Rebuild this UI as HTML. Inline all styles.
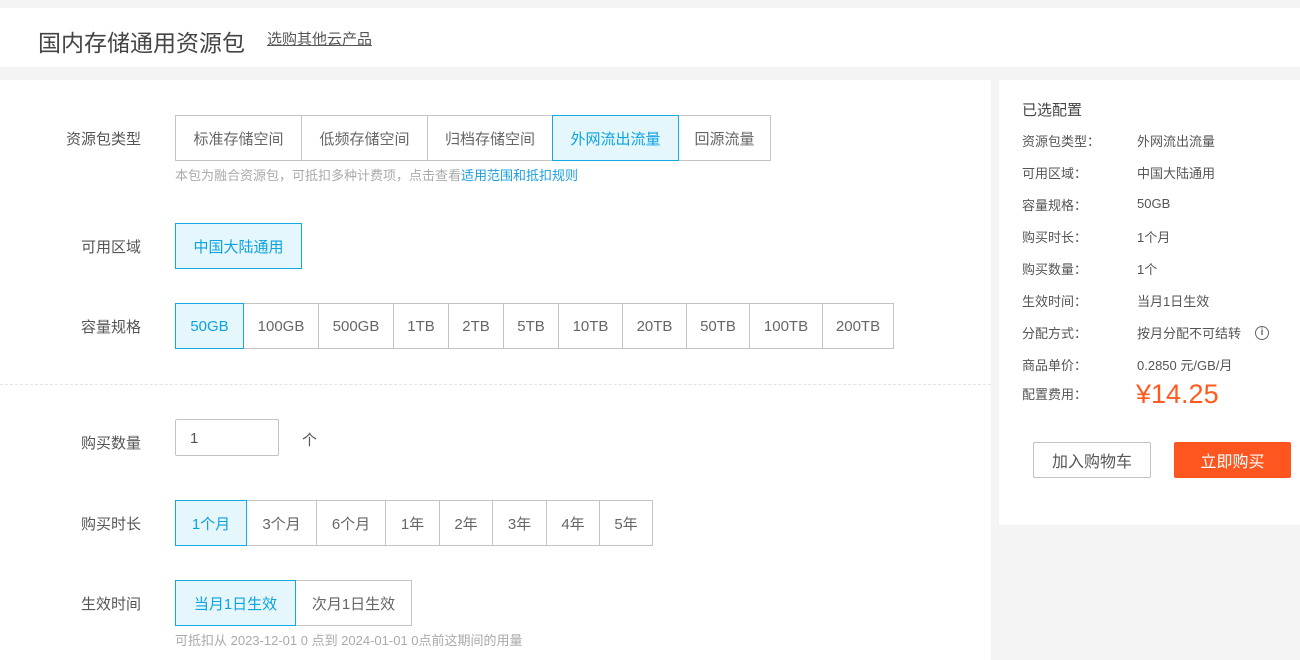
<!DOCTYPE html>
<html><head><meta charset="utf-8"><style>
*{margin:0;padding:0;box-sizing:border-box}
body{width:1300px;height:660px;background:#f4f4f4;font-family:"Liberation Sans","Noto Sans CJK SC",sans-serif;color:#555;position:relative;overflow:hidden}
.a{position:absolute}
.b{position:absolute;border:1px solid #c4c4c4;background:#fff;font-size:15px;color:#666;display:flex;align-items:center;justify-content:center;white-space:nowrap}
.s{background:#e6f6fd;border-color:#14a8e4;color:#0aa3e2;z-index:2}
.lbl{position:absolute;font-size:15px;color:#555;width:141px;text-align:right}
.r{position:absolute;font-size:13px;color:#555}
</style></head><body>
<div class="a" style="left:0;top:8px;width:1300px;height:59px;background:#fff"></div>
<div class="a" style="left:38px;top:24px;font-size:23px;color:#444">国内存储通用资源包</div>
<div class="a" style="left:267px;top:28px;font-size:15px;color:#555;text-decoration:underline">选购其他云产品</div>
<div class="a" style="left:0;top:80px;width:991px;height:580px;background:#fff"></div>
<div class="a" style="left:0;top:384px;width:991px;border-top:1px dashed #e4e4e4"></div>

<div class="lbl" style="left:0;top:128px">资源包类型</div>
<div class="b" style="left:175px;top:115px;width:127px;height:46px">标准存储空间</div>
<div class="b" style="left:301px;top:115px;width:127px;height:46px">低频存储空间</div>
<div class="b" style="left:427px;top:115px;width:126px;height:46px">归档存储空间</div>
<div class="b s" style="left:552px;top:115px;width:127px;height:46px">外网流出流量</div>
<div class="b" style="left:678px;top:115px;width:93px;height:46px">回源流量</div>
<div class="a" style="left:175px;top:165px;font-size:13px;color:#aaa">本包为融合资源包，可抵扣多种计费项，点击查看<span style="color:#1a9fe0">适用范围和抵扣规则</span></div>

<div class="lbl" style="left:0;top:236px">可用区域</div>
<div class="b s" style="left:175px;top:223px;width:127px;height:46px">中国大陆通用</div>

<div class="lbl" style="left:0;top:316px">容量规格</div>
<div class="b s" style="left:175px;top:303px;width:69px;height:46px">50GB</div>
<div class="b" style="left:243px;top:303px;width:76px;height:46px">100GB</div>
<div class="b" style="left:318px;top:303px;width:76px;height:46px">500GB</div>
<div class="b" style="left:393px;top:303px;width:56px;height:46px">1TB</div>
<div class="b" style="left:448px;top:303px;width:56px;height:46px">2TB</div>
<div class="b" style="left:503px;top:303px;width:56px;height:46px">5TB</div>
<div class="b" style="left:558px;top:303px;width:65px;height:46px">10TB</div>
<div class="b" style="left:622px;top:303px;width:65px;height:46px">20TB</div>
<div class="b" style="left:686px;top:303px;width:64px;height:46px">50TB</div>
<div class="b" style="left:749px;top:303px;width:74px;height:46px">100TB</div>
<div class="b" style="left:822px;top:303px;width:72px;height:46px">200TB</div>

<div class="lbl" style="left:0;top:432px">购买数量</div>
<div class="a" style="left:175px;top:419px;width:104px;height:37px;border:1px solid #c4c4c4;border-radius:2px;font-size:15px;color:#555;padding:10px 0 0 14px">1</div>
<div class="a" style="left:302px;top:429px;font-size:15px;color:#555">个</div>

<div class="lbl" style="left:0;top:513px">购买时长</div>
<div class="b s" style="left:175px;top:500px;width:72px;height:46px">1个月</div>
<div class="b" style="left:246px;top:500px;width:71px;height:46px">3个月</div>
<div class="b" style="left:316px;top:500px;width:70px;height:46px">6个月</div>
<div class="b" style="left:385px;top:500px;width:55px;height:46px">1年</div>
<div class="b" style="left:439px;top:500px;width:54px;height:46px">2年</div>
<div class="b" style="left:492px;top:500px;width:55px;height:46px">3年</div>
<div class="b" style="left:546px;top:500px;width:54px;height:46px">4年</div>
<div class="b" style="left:599px;top:500px;width:54px;height:46px">5年</div>

<div class="lbl" style="left:0;top:593px">生效时间</div>
<div class="b s" style="left:175px;top:580px;width:121px;height:46px">当月1日生效</div>
<div class="b" style="left:295px;top:580px;width:117px;height:46px">次月1日生效</div>
<div class="a" style="left:175px;top:630px;font-size:13px;color:#aaa">可抵扣从 2023-12-01 0 点到 2024-01-01 0点前这期间的用量</div>

<div class="a" style="left:999px;top:80px;width:301px;height:445px;background:#fff"></div>
<div class="a" style="left:1022px;top:99px;font-size:15px;color:#444">已选配置</div>
<div class="r" style="left:1022px;top:131px">资源包类型：</div><div class="r" style="left:1137px;top:131px">外网流出流量</div>
<div class="r" style="left:1022px;top:163px">可用区域：</div><div class="r" style="left:1137px;top:163px">中国大陆通用</div>
<div class="r" style="left:1022px;top:195px">容量规格：</div><div class="r" style="left:1137px;top:196px">50GB</div>
<div class="r" style="left:1022px;top:227px">购买时长：</div><div class="r" style="left:1137px;top:227px">1个月</div>
<div class="r" style="left:1022px;top:259px">购买数量：</div><div class="r" style="left:1137px;top:259px">1个</div>
<div class="r" style="left:1022px;top:291px">生效时间：</div><div class="r" style="left:1137px;top:291px">当月1日生效</div>
<div class="r" style="left:1022px;top:323px">分配方式：</div><div class="r" style="left:1137px;top:323px">按月分配不可结转</div>
<div class="a" style="left:1255px;top:326px;width:14px;height:14px;border:1px solid #666;border-radius:50%;font-size:10px;color:#666;text-align:center;line-height:12px;font-weight:bold">i</div>
<div class="r" style="left:1022px;top:355px">商品单价：</div><div class="r" style="left:1137px;top:355px">0.2850 元/GB/月</div>
<div class="r" style="left:1022px;top:384px">配置费用：</div>
<div class="a" style="left:1136px;top:379px;font-size:27px;color:#ff5a1f">¥14.25</div>
<div class="b" style="left:1033px;top:442px;width:118px;height:36px;border-radius:2px;color:#555;font-size:16px">加入购物车</div>
<div class="b" style="left:1174px;top:442px;width:117px;height:36px;border-radius:2px;background:#ff561f;border-color:#ff561f;color:#fff;font-size:16px">立即购买</div>
</body></html>
